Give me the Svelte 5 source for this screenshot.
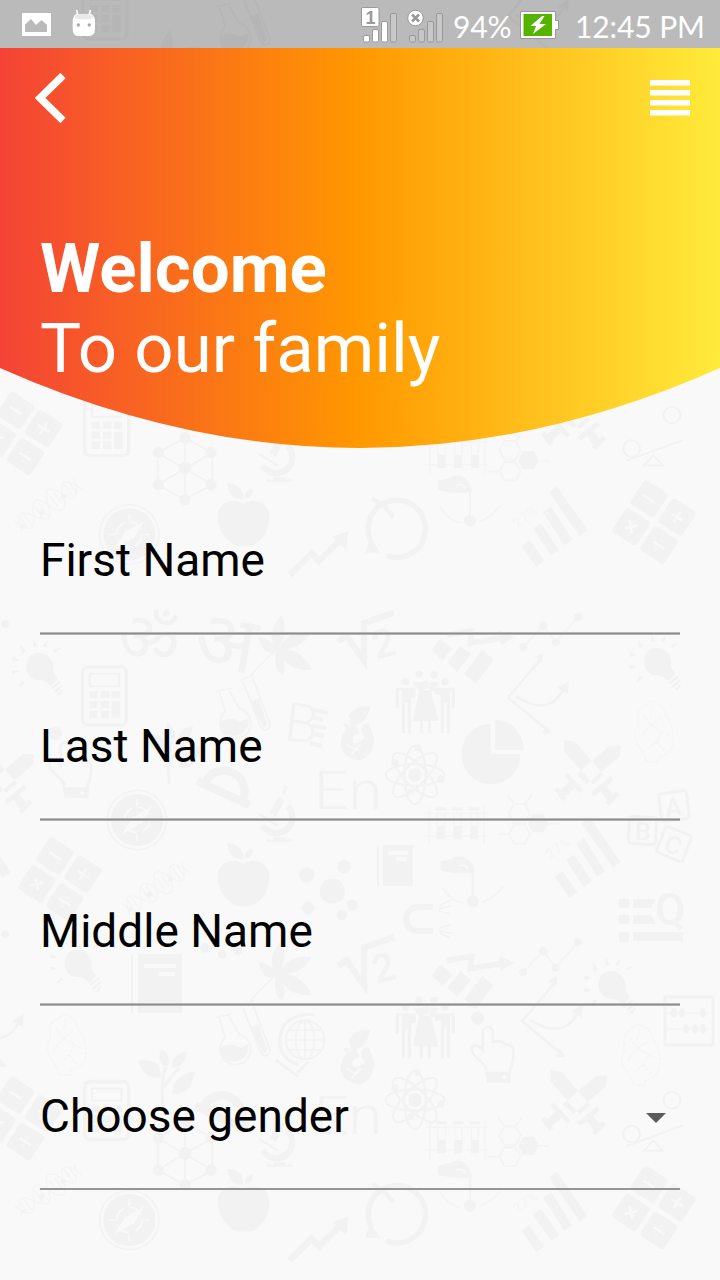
<script>
  const fields = [
    { label: 'First Name' },
    { label: 'Last Name' },
    { label: 'Middle Name' },
    { label: 'Choose gender', select: true }
  ];

  // Background doodles: [symbol, x, y]
  const doodles = [
    ['keys', 654, 522], ['keys', 654, 1207.5], ['keys', 20.5, 433.5], ['keys', 60, 879], ['keys', 20.5, 1118.5],
    ['calc', 104.5, 696], ['calc', 106.7, 426.7], ['calc', 106.7, 1110.5], ['calc', 105, 10],
    ['net', 185, 468], ['net', 185, 1153.3],
    ['scope', 278, 819], ['scope', 278, 459], ['scope', 278, 1144],
    ['apple', 243.7, 523], ['apple', 243.7, 1208.5], ['apple', 243.7, 883],
    ['zig', 319, 554.3], ['zig', 319, 1239.7],
    ['dna', 48.3, 505], ['dna', 155.7, 888], ['dna', 48.3, 1190],
    ['compass', 129.3, 534.5], ['compass', 137, 820], ['compass', 129.3, 1220],
    ['cycle', 394.3, 527.3], ['cycle', 394.3, 1212.7],
    ['rack', 456.7, 454.7], ['rack', 456, 826], ['rack', 456.7, 1140],
    ['mol', 518.3, 458], ['mol', 527.7, 821], ['mol', 518.3, 1143.3],
    ['swing', 470, 520.7], ['swing', 472.7, 901.3], ['swing', 470, 1205.7],
    ['bars', 555, 526.7], ['bars', 588, 858], ['bars', 555, 1212], ['bars', -22, 868],
    ['swords', 591.7, 771.7], ['swords', 578.3, 1101.7], ['swords', 578.3, 416.3], ['swords', 5, 780],
    ['scale', 653.3, 440], ['scale', 653.3, 1125.3],
    ['bulb', 40, 666.7], ['bulb', 657.7, 661.7], ['bulb', 78.3, 963.3], ['bulb', 612.3, 985],
    ['leaf', 276.7, 648.3], ['leaf', 276.7, 973.3], ['leaf', 165, 63],
    ['root', 366, 640], ['root', 366, 964.5],
    ['flask', 240, 715], ['flask', 240, 1041], ['flask', 240, 30],
    ['people', 425, 703], ['people', 425, 1028.5],
    ['squirrel', 358, 735], ['squirrel', 358, 1059],
    ['steps', 463, 655], ['steps', 463, 980.5],
    ['graph', 550, 633], ['graph', 550, 958.3],
    ['axes', 536, 697.7], ['axes', 550, 1021.3], ['axes', -9, 1031], ['axes', 536, 16],
    ['pie', 492.3, 752.7],
    ['atom', 415, 775], ['atom', 415, 1100],
    ['brain', 653.3, 731.7], ['brain', 640, 1055], ['brain', 66, 1045],
    ['thumb', 498.3, 1076.7], ['thumb', 76, 792],
    ['sprout', 166, 1078], ['sprout', 172, 752],
    ['arc', 227, 783], ['arc', 225, 1108],
    ['globe', 305, 1040]
  ];
</script>

<div class="screen">
  <svg class="pattern" width="720" height="1280" viewBox="0 0 720 1280" aria-hidden="true">
    <defs>
      <g id="keys"><g transform="rotate(33)">
        <path class="f" d="M-82-93h64a11 11 0 0 1 11 11v64a11 11 0 0 1-11 11h-64a11 11 0 0 1-11-11v-64a11 11 0 0 1 11-11zM18-93h64a11 11 0 0 1 11 11v64a11 11 0 0 1-11 11H18a11 11 0 0 1-11-11v-64a11 11 0 0 1 11-11zM-82 7h64a11 11 0 0 1 11 11v64a11 11 0 0 1-11 11h-64a11 11 0 0 1-11-11V18A11 11 0 0 1-82 7zM18 7h64a11 11 0 0 1 11 11v64a11 11 0 0 1-11 11H18A11 11 0 0 1 7 82V18A11 11 0 0 1 18 7z" />
        <path class="cut" d="M-70-50h40M30-50h40M50-70v40M-64 36l28 28M-36 36l-28 28M30 50h40M50 33v4M50 63v4" />
      </g></g>
      <g id="calc">
        <rect class="s" stroke-width="10" x="-66" y="-87" width="132" height="174" rx="17" />
        <rect class="s" stroke-width="6" x="-44" y="-66" width="88" height="36" />
        <path class="f" d="M-46-15h25V6h-25zM-11-15h25V6h-25zM22-15h25V6H22zM-46 15h25v21h-25zM-11 15h25v21h-25zM22 15h25v52H22zM-46 44h25v23h-25zM-11 44h25v23h-25z" />
      </g>
      <g id="net">
        <path class="s" stroke-width="5" d="M0-91L82-46V50L0 95-82 50V-46zM0-91V95M82-46L-82 50M-82-46L82 50" />
        <g class="f"><circle r="19" /><circle cy="-91" r="17" /><circle cy="95" r="17" /><circle cx="78" cy="-46" r="17" /><circle cx="78" cy="50" r="17" /><circle cx="-80" cy="50" r="17" /><circle cx="-80" cy="-46" r="17" /></g>
      </g>
      <g id="scope">
        <path class="s" stroke-width="19" d="M30-38A48 48 0 1 1-46 20" />
        <path class="s" stroke-width="22" d="M10-62L-16-12" /><path class="s" stroke-width="10" d="M26-100L16-76" />
        <path class="s" stroke-width="7" d="M-58-16L0 20M-36 65H44M-14 58H22" />
      </g>
      <g id="apple">
        <path class="f" d="M-1-58C20-70 60-72 74-38 88 5 55 68 15 69 5 70-5 70-15 69-58 60-86 0-76-35-63-72-22-70-1-58zM-1-72C-40-72-46-94-49-120-20-116 0-104-1-72zM5-74C2-94 12-100 28-102 28-84 20-76 5-74z" />
      </g>
      <g id="zig"><path class="s" stroke-width="19" d="M-88 62L-22-3 0 20 66-45" /><path class="f" d="M88-70L82-14 40-52z" /></g>
      <g id="dna"><g class="s faint" stroke-width="4" transform="rotate(-36)">
        <path d="M-110 20C-88-60-68-20-55 0S-20 60 0 0 40-40 55 0 90 40 110-20M-110-20C-88 50-68 25-55 0S-20-60 0 0 40 40 55 0 90-40 110 22" />
        <path d="M-90-22V22M-76-22V22M-35-22V22M-20-22V22M20-20V20M36-20V20M75-20V20M90-20V20" />
      </g><g class="f"><circle cx="-20" cy="20" r="8" /><circle cx="45" cy="-25" r="8" /><circle cx="-75" cy="65" r="7" /></g></g>
      <g id="compass"><circle class="s" stroke-width="4" r="89" /><circle class="f" r="78" />
        <path class="cut thin" d="M0-62V-42M0 42V62M-62 0H-42M42 0H62" /><circle class="cut thin" r="38" stroke-dasharray="42 18" />
        <path class="hole" d="M46-42L12 14-8-10zM-44 42L-10-12 9 11z" /></g>
      <g id="cycle"><path class="s" stroke-width="16" d="M-23 85A86 86 0 1 0-70 42" /><path class="f" d="M-88 76L-72 30-42 76z" /><path class="s" stroke-width="13" d="M-66-86L-32-66-2-30" /></g>
      <g id="rack"><path class="s faint" stroke-width="4" d="M-94-38H94M-94 30H94M-80-60V58M84-60V58M-57-36V40M-34-36V40M-6-36V40M16-36V40M44-36V40M65-36V40" /><path class="f" d="M-62-56h32v9h-32zM-12-56h32v9h-32zM38-56h32v9H38zM-56 0h21v40h-21zM-6 0h21v40H-6zM44 0h21v40H44z" /></g>
      <g id="mol"><path class="s faint" stroke-width="6" d="M-41-51h32l16 28-16 28h-32l-16-28zM-41 12h32l16 28L-9 68h-32l-16-28zM-41-51l-20-28M-9-51l22-28M-57 40h-34M58 8h36" /><path class="f" d="M14-20h32L62 8 46 34H14L0 8z" /></g>
      <g id="swing"><circle class="f" r="18" /><path class="s" stroke-width="6" d="M0-16V-88" /><path class="f" d="M-96-120L-60-128C-45-142-15-136 0-108 4-100 6-90 6-84H-40C-60-84-70-88-96-92z" /><path class="cut thin" d="M-42-106Q-20-114-14-96" /><path class="s faint" stroke-width="5" d="M-90-42Q-66 0-28 6M28 2Q62-8 90-44" /></g>
      <g id="bars"><path class="s" stroke-width="29" d="M-88 48L-44 112M-54-2L0 78M-24-52L40 48M-6-112L86 20" /><text class="t faint-text" font-size="40" transform="translate(-114 4) rotate(-35)" textLength="80">27%</text></g>
      <g id="swords">
        <path class="f" d="M-82-94L-50-90 36 10 4 38-84-62zM88-78H54L-46 8-14 36 84-46z" />
        <path class="s" stroke-width="14" d="M-78 8L-30 60M60 20L2 68" />
        <path class="s" stroke-width="24" d="M-50 32L-92 68M28 42L60 84" />
        <path class="s" stroke-width="15" d="M-106 50L-80 84M78 64L46 96" />
      </g>
      <g id="scale"><g class="s" stroke-width="6"><circle cx="56" cy="-75" r="25" /><circle cx="-65" cy="26" r="25" /><path d="M-80 62L90 0" /><path d="M0 46L-28 76H28z" /></g></g>
      <g id="bulb"><path class="f" d="M-10-41C20-44 44-22 40 8 38 22 50 28 54 36L32 58C20 46 8 40-4 41-30 40-42 20-41-2-40-24-28-38-10-41zM32 62L60 42 64 47 38 68zM42 73L66 53 68 59 48 79zM52 83L68 66 68 74 60 86z" />
        <path class="f" d="M-84 10l22 4-22 10zM-84-30l22 10-20 6zM-60-68l18 22-12 8zM-20-84l12 22-12 4zM24-80l-4 22-12-4zM66-58L44-42l-4-8zM-66 62l12-20 10 8z" /></g>
      <g id="leaf"><path class="f" d="M0 0C-30-30-10-70 15-100 30-60 25-30 5 0 30-45 65-55 105-48 80-5 40 5 5 5 50-5 85 20 105 64 60 70 25 50 5 8 30 40 25 60 18 82-5 65-10 40-2 8-30 20-45 5-55-35-30-30-15-20 0 0z" /><path class="s" stroke-width="4" d="M0 2Q-40 40-80 82" /></g>
      <g id="root"><path class="s" stroke-width="19" d="M-84 4L-58-12-6 62V-50L84-82" /><text class="t" font-size="118" font-weight="500" transform="translate(30 58) rotate(-14)">2</text></g>
      <g id="flask"><g class="s" stroke-width="5"><path d="M-74-70L-26-80M-62-68L-44-10A46 46 0 1 0-2-20L-32-72" /><path d="M2-104L42-122M8-100L62 34Q72 52 86 40 92 32 88 22L36-116" /></g><path class="f" d="M-64 24Q-30 0 0 20L26 10A42 42 0 0 1-64 24zM30-42L56-50 80 22Q82 36 70 36z" /></g>
      <g id="people"><g class="f"><circle cx="-58" cy="-64" r="11" /><circle cx="-18" cy="-86" r="11" /><circle cx="28" cy="-84" r="11" /><circle cx="60" cy="-64" r="11" /><circle cy="-54" r="12" />
        <path d="M-88-46h60v30h-14V90h-10V0h-8V90h-10V-38h-8V16h-10zM30-46h60v60H80v-50h-5V90H65V0h-8V90H47V-24H30zM-18-38h36L40 54H18v36H8V54H-6v36h-10V54h-20zM-38-62h30l8 18-14 10zM12-62h30L28-34 14-40z" /></g></g>
      <g id="squirrel"><path class="f" d="M-28-60Q-4-92 38-86 26-40-6-28L4-6Q-20 0-16 16-14 36 20 10-6-30 30-36 50 0 48 24 38 72 0 76-54 66-52 18-44-16-20-24zM-46-36l22 6-10 16z" /><path class="cut thin" d="M-34 28Q-14 44 2 42M-20 58L8 28" /></g>
      <g id="steps"><path class="f" d="M-68-48l36 30-30 34-32-32zM-8-28L24-2-18 50-46 22zM58-14L92 14 38 86 4 56z" /><path class="s" stroke-width="17" d="M-48-60L26-72 22-36 112-50" /><path class="f" d="M108-74l46 20-40 26z" /></g>
      <g id="graph"><path class="s faint" stroke-width="5" d="M-80 42L-20-22 17 28 83-48" /><g class="f"><circle cx="-80" cy="42" r="12" /><circle cx="-20" cy="-22" r="13" /><circle cx="17" cy="28" r="12" /><circle cx="83" cy="-48" r="12" /></g></g>
      <g id="axes"><path class="s" stroke-width="8" d="M18-120L-84 0 36 98M-60-4Q40 60 84-28" /><path class="f" d="M22-134l-4 30-22-20zM46 108l-28-2 14-22zM98-50L96-12 64-30z" /></g>
      <g id="pie"><path class="f" d="M-4-87V4H84A88 91 0 1 1-4-87zM8-99A88 88 0 0 1 94-8H8z" /></g>
      <g id="atom"><g class="s" stroke-width="6"><ellipse rx="88" ry="32" /><ellipse rx="88" ry="32" transform="rotate(45)" /><ellipse rx="88" ry="32" transform="rotate(90)" /><ellipse rx="88" ry="32" transform="rotate(135)" /></g><g class="f"><circle r="20" /><circle cx="-60" cy="-36" r="11" /><circle cx="8" cy="-82" r="10" /><circle cx="78" cy="12" r="11" /><circle cx="-12" cy="50" r="10" /></g></g>
      <g id="brain"><path class="s faint" stroke-width="4" stroke-dasharray="9 4" d="M-20-80Q-55-70-46-30-64 10-46 42-28 58-22 88L12 92 18 74Q60 70 60 20 60-20 36-50 30-86-10-92zM-30-50L-6-20 20-40M-6-20Q-30 0-36 20M-6-20L24 0 10 30M24 0L50 10M10 30L-14 50M10 30L36 60M0-80L-8-46" /></g>
      <g id="thumb"><path class="f" d="M-40-15H38V18H-34zM-62-156a20 20 0 1 1 .1 0z" /><path class="hole" d="M18-4a6 6 0 1 1-.1 0z" /><path class="s" stroke-width="8" d="M-34-16C-40-50-80-55-80-84-76-104-54-90-46-80V-140Q-30-160-16-138V-104Q10-112 20-96 48-98 46-66 44-40 34-16" /></g>
      <g id="sprout"><path class="s" stroke-width="9" d="M-8 96C-14 40-14 0 0-32M-8 30Q10 0 40-30" /><path class="f" d="M-82-52C-30-58-18-40-14 0-60 0-74-20-82-52zM-14-90Q14-68 8-38-6-32-14-42-26-62-14-90zM62-80Q60-30 16-32 14-66 62-80zM88-20Q70 60 20 46 18-6 88-20z" /></g>
      <g id="arc"><g transform="rotate(25)"><path class="s" stroke-width="25" d="M-84 32H90M-60 26A62 62 0 0 1 64 26" /></g></g>
      <g id="globe"><g class="s" stroke-width="5"><circle r="58" /><ellipse rx="28" ry="58" /><path d="M0-58V58M-58 0H58M-48-30H48M-48 30H48" /></g><path class="s" stroke-width="9" d="M28-76Q-74-82-76 8-72 60-20 74M-88 60L-20 110M-24 100L10 66" /></g>
    </defs>

    {#each doodles as [id, x, y]}
      <use href="#{id}" transform="translate({x} {y}) scale(.3333)" />
    {/each}

    <!-- Single doodles -->
    <g class="t">
      <text x="118" y="664" font-size="68" font-family="Noto Sans Devanagari, Lohit Devanagari, FreeSans, sans-serif" transform="rotate(16 150 640)">ॐ</text>
      <text x="196" y="670" font-size="80" font-family="Noto Sans Devanagari, Lohit Devanagari, FreeSans, sans-serif" transform="rotate(10 230 640)">अ</text>
      <text x="285" y="742" font-size="54" font-weight="300" transform="rotate(7 300 725)">B</text>
      <text x="314" y="809" font-size="54" font-weight="300" textLength="68" lengthAdjust="spacingAndGlyphs">En</text>
      <text x="314" y="1134" font-size="54" font-weight="300" textLength="68" lengthAdjust="spacingAndGlyphs">En</text>
      <text x="665" y="816" font-size="25" font-weight="500" transform="rotate(-8 674 807)">A</text>
      <text x="635" y="840" font-size="25" font-weight="500" transform="rotate(4 642 832)">B</text>
      <text x="665" y="854" font-size="25" font-weight="500" transform="rotate(20 674 845)">C</text>
      <text x="655" y="925" font-size="44" font-weight="500">Q</text>
    </g>
    <g class="s" stroke-width="3">
      <rect x="660" y="792" width="28" height="28" rx="3" transform="rotate(-7 674 806)" />
      <rect x="629" y="817" width="27" height="27" rx="3" transform="rotate(4 642 830)" />
      <rect x="660" y="830" width="28" height="28" rx="3" transform="rotate(22 674 844)" />
      <path stroke-width="4" d="M314 710l14 3M312 718l11 2M312 726l14 2M311 734l13 2M310 743l12 3" />
      <path stroke-width="6" d="M433 907H418a12 12 0 0 0 0 24h15" />
      <path stroke-width="1.5" d="M439 906l12-6M438 909l13-3M439 911l11 3M439 928l12-3M439 931l13 2M440 933l10 5" />
      <rect x="665" y="997" width="48" height="48" /><path stroke-width="1" d="M665 1013h48M665 1029h48" />
      <path stroke-width="2" d="M378 845v41M132 955v58" />
    </g>
    <g class="f">
      <path d="M383 845h30v41h-30zM138 954h44v59h-44z" />
      <path d="M619 899h10v9h-10zM619 915h10v9h-10zM619 932h10v10h-10zM633 899h22l-4 9h-18zM633 915h18l5 9h-23zM633 932h50v9h-50z" />
      <circle cx="306.7" cy="875" r="7.7" /><circle cx="344" cy="867" r="6.7" /><circle cx="332.3" cy="891" r="12.7" /><circle cx="308.3" cy="908" r="6.3" /><circle cx="352" cy="905" r="5.5" /><circle cx="342" cy="915" r="5.5" />
      <circle cx="205" cy="948" r="5" /><circle cx="222" cy="954" r="4.5" /><circle cx="238" cy="950" r="5" /><circle cx="5" cy="624" r="4" /><circle cx="5" cy="934" r="4" />
      <ellipse cx="674" cy="1013" rx="3" ry="5" /><ellipse cx="682" cy="1013" rx="3" ry="5" /><ellipse cx="703" cy="1013" rx="3" ry="5" /><ellipse cx="686" cy="1029" rx="3" ry="5" /><ellipse cx="695" cy="1029" rx="3" ry="5" /><ellipse cx="703" cy="1029" rx="3" ry="5" />
    </g>
    <path class="cut book" d="M388 853h20M396 859h11M144 966h32M158 974h17" />
  </svg>

  <div class="status">
    <div class="notes">
      <svg width="30" height="24" viewBox="0 0 30 24"><path fill="#fff" fill-rule="evenodd" d="M1 0H28a1 1 0 0 1 1 1V23H0V1A1 1 0 0 1 1 0zM3 19H25V12L19.500 7 14 12 9 6 3 11.500z" /></svg>
      <svg width="24" height="28" viewBox="0 0 24 28"><path d="M6 7L4.600 1M17 7L18.400 1" stroke="#fff" stroke-width="1.500" /><path fill="#fff" d="M4 5H19Q23 7 23 12V20Q23 27 17 27H6Q.700 27 .700 20V12Q1 7 4 5z" /><path fill="#e9e9e9" d="M3 6.500Q11.500 3 20.500 6.500V9Q11.500 12 3 9z" /><circle cx="6.300" cy="16" r="1.700" fill="#aaa" /><circle cx="17.300" cy="16" r="1.700" fill="#aaa" /></svg>
    </div>
    <div class="system">
      <svg width="36" height="37" viewBox="0 0 36 37" stroke="#999" stroke-width="1">
        <g fill="#fff"><rect x="2.500" y="29.500" width="6" height="6.500" rx="1.500" /><rect x="11.500" y="23.500" width="6" height="12.500" rx="1.500" /><rect x="20.500" y="15.500" width="6" height="20.500" rx="1.500" /></g>
        <rect x="29.500" y="7.500" width="6" height="28.500" rx="1.500" fill="#c7c7c7" />
        <rect x=".5" y="1.500" width="17.500" height="19" rx="1.500" fill="#fff" /><text x="4.500" y="17.500" font-family="Liberation Sans, sans-serif" font-weight="700" font-size="18" fill="#999" stroke="none">1</text>
      </svg>
      <svg class="sim" width="36" height="37" viewBox="0 0 36 37" stroke="#999" stroke-width="1" fill="#c7c7c7">
        <rect x="2.500" y="29.500" width="6" height="6.500" rx="1.500" /><rect x="11.500" y="23.500" width="6" height="12.500" rx="1.500" /><rect x="20.500" y="15.500" width="6" height="20.500" rx="1.500" /><rect x="29.500" y="7.500" width="6" height="28.500" rx="1.500" />
        <circle cx="8.500" cy="12" r="7.800" fill="#fff" /><path d="M5 8.500l7 7M12 8.500l-7 7" stroke-width="2.600" />
      </svg>
      <span class="percent">94%</span>
      <svg class="battery" width="39" height="28" viewBox="0 0 39 28"><path fill="#fff" stroke="#999" d="M.5.5H35.500V9.500H38.500V18.500H35.500V27.500H.5z" /><path fill="#55b400" d="M3.500 3H32V25H3.500z" /><path fill="#fff" d="M22 5L10.500 15H16L13 23 26 13H19.500L24.500 5z" /></svg>
      <span class="clock">12:45 PM</span>
    </div>
  </div>

  <header>
    <svg class="wave" width="720" height="400" viewBox="0 0 720 400" aria-hidden="true">
      <defs><linearGradient id="warm"><stop offset="0" stop-color="#f44336" /><stop offset=".5" stop-color="#ff9800" /><stop offset="1" stop-color="#ffeb3b" /></linearGradient></defs>
      <path fill="url(#warm)" d="M0 0H720V320Q360 480 0 320z" />
    </svg>
    <nav>
      <svg width="31" height="50" viewBox="0 0 31 50"><path d="M28 2.500L5 25 28 47.500" fill="none" stroke="#fff" stroke-width="7.500" /></svg>
      <svg class="menu" width="40" height="36" viewBox="0 0 40 36"><path fill="#fff" d="M0 0h40v5.500H0zM0 10h40v5.500H0zM0 20h40v5.500H0zM0 30h40v5.500H0z" /></svg>
    </nav>
    <h1><b>Welcome</b><br />To our family</h1>
  </header>

  <main>
    {#each fields as field}
      <div class="field" class:select={field.select}>
        <span>{field.label}</span>
        {#if field.select}
          <svg width="20" height="10" viewBox="0 0 20 10"><path fill="#5b5b5b" d="M0 0H20L10 10z" /></svg>
        {/if}
      </div>
    {/each}
  </main>
</div>

<style>
  :global(body) { margin: 0; }
  .screen {
    position: relative;
    isolation: isolate;
    width: 720px;
    height: 1280px;
    overflow: hidden;
    background: #f9f9f9;
    font-family: Roboto, sans-serif;
  }
  svg { display: block; flex: none; }
  .pattern { position: absolute; inset: 0; z-index: -2; }
  .f { fill: #f2f2f2; }
  .s { fill: none; stroke: #f2f2f2; }
  .faint { stroke: #f4f4f4; }
  .t { fill: #f2f2f2; font-family: Roboto, sans-serif; }
  .faint-text { fill: #f5f5f5; }
  .cut { fill: none; stroke: #f9f9f9; stroke-width: 7; }
  .cut.thin { stroke-width: 5; }
  .cut.book { stroke-width: 4; }
  .hole { fill: #f9f9f9; }

  .status {
    box-sizing: border-box;
    display: flex;
    justify-content: space-between;
    height: 48px;
    padding: 0 16px 0 22px;
    background: rgba(0, 0, 0, 0.25);
    color: #fff;
    font-family: Lato, sans-serif;
    font-size: 30px;
    line-height: 36px;
  }
  .notes { display: flex; gap: 20px; padding-top: 9px; }
  .notes svg:first-child { margin-top: 4px; }
  .system { display: flex; padding-top: 6px; }
  .sim { margin-left: 10px; }
  .percent { width: 58px; margin-left: 10px; padding-top: 2px; letter-spacing: -0.2px; white-space: nowrap; }
  .battery { margin: 5px 0 0 9px; }
  .clock { width: 129px; margin-left: 16px; padding-top: 2px; letter-spacing: -0.1px; white-space: nowrap; }

  header { position: relative; box-sizing: border-box; height: 400px; }
  .wave { position: absolute; inset: 0; z-index: -1; }
  nav { display: flex; justify-content: space-between; padding: 25px 30px 0 35px; }
  .menu { margin-top: 7px; }
  h1 {
    margin: 106px 0 0 40px;
    color: #fff;
    font-size: 69px;
    font-weight: 400;
    line-height: 80px;
  }
  main {
    display: grid;
    grid-template-rows: 186px 186px 185px 184px;
    padding: 1px 40px 0;
  }
  .field {
    box-sizing: border-box;
    display: flex;
    align-items: flex-end;
    justify-content: space-between;
    padding: 0 14px 48px 0;
    background: linear-gradient(#b9b9b9 0 1px, #8c8c8c 1px 2px, #b3b3b3 2px 3px) bottom / 100% 3px no-repeat;
    color: #000;
    font-size: 46px;
    line-height: 54px;
  }
  .field.select {
    padding-bottom: 47px;
    background: linear-gradient(#959595, #959595) bottom / 100% 2px no-repeat;
  }
  .field svg { margin-bottom: 20px; }
</style>
